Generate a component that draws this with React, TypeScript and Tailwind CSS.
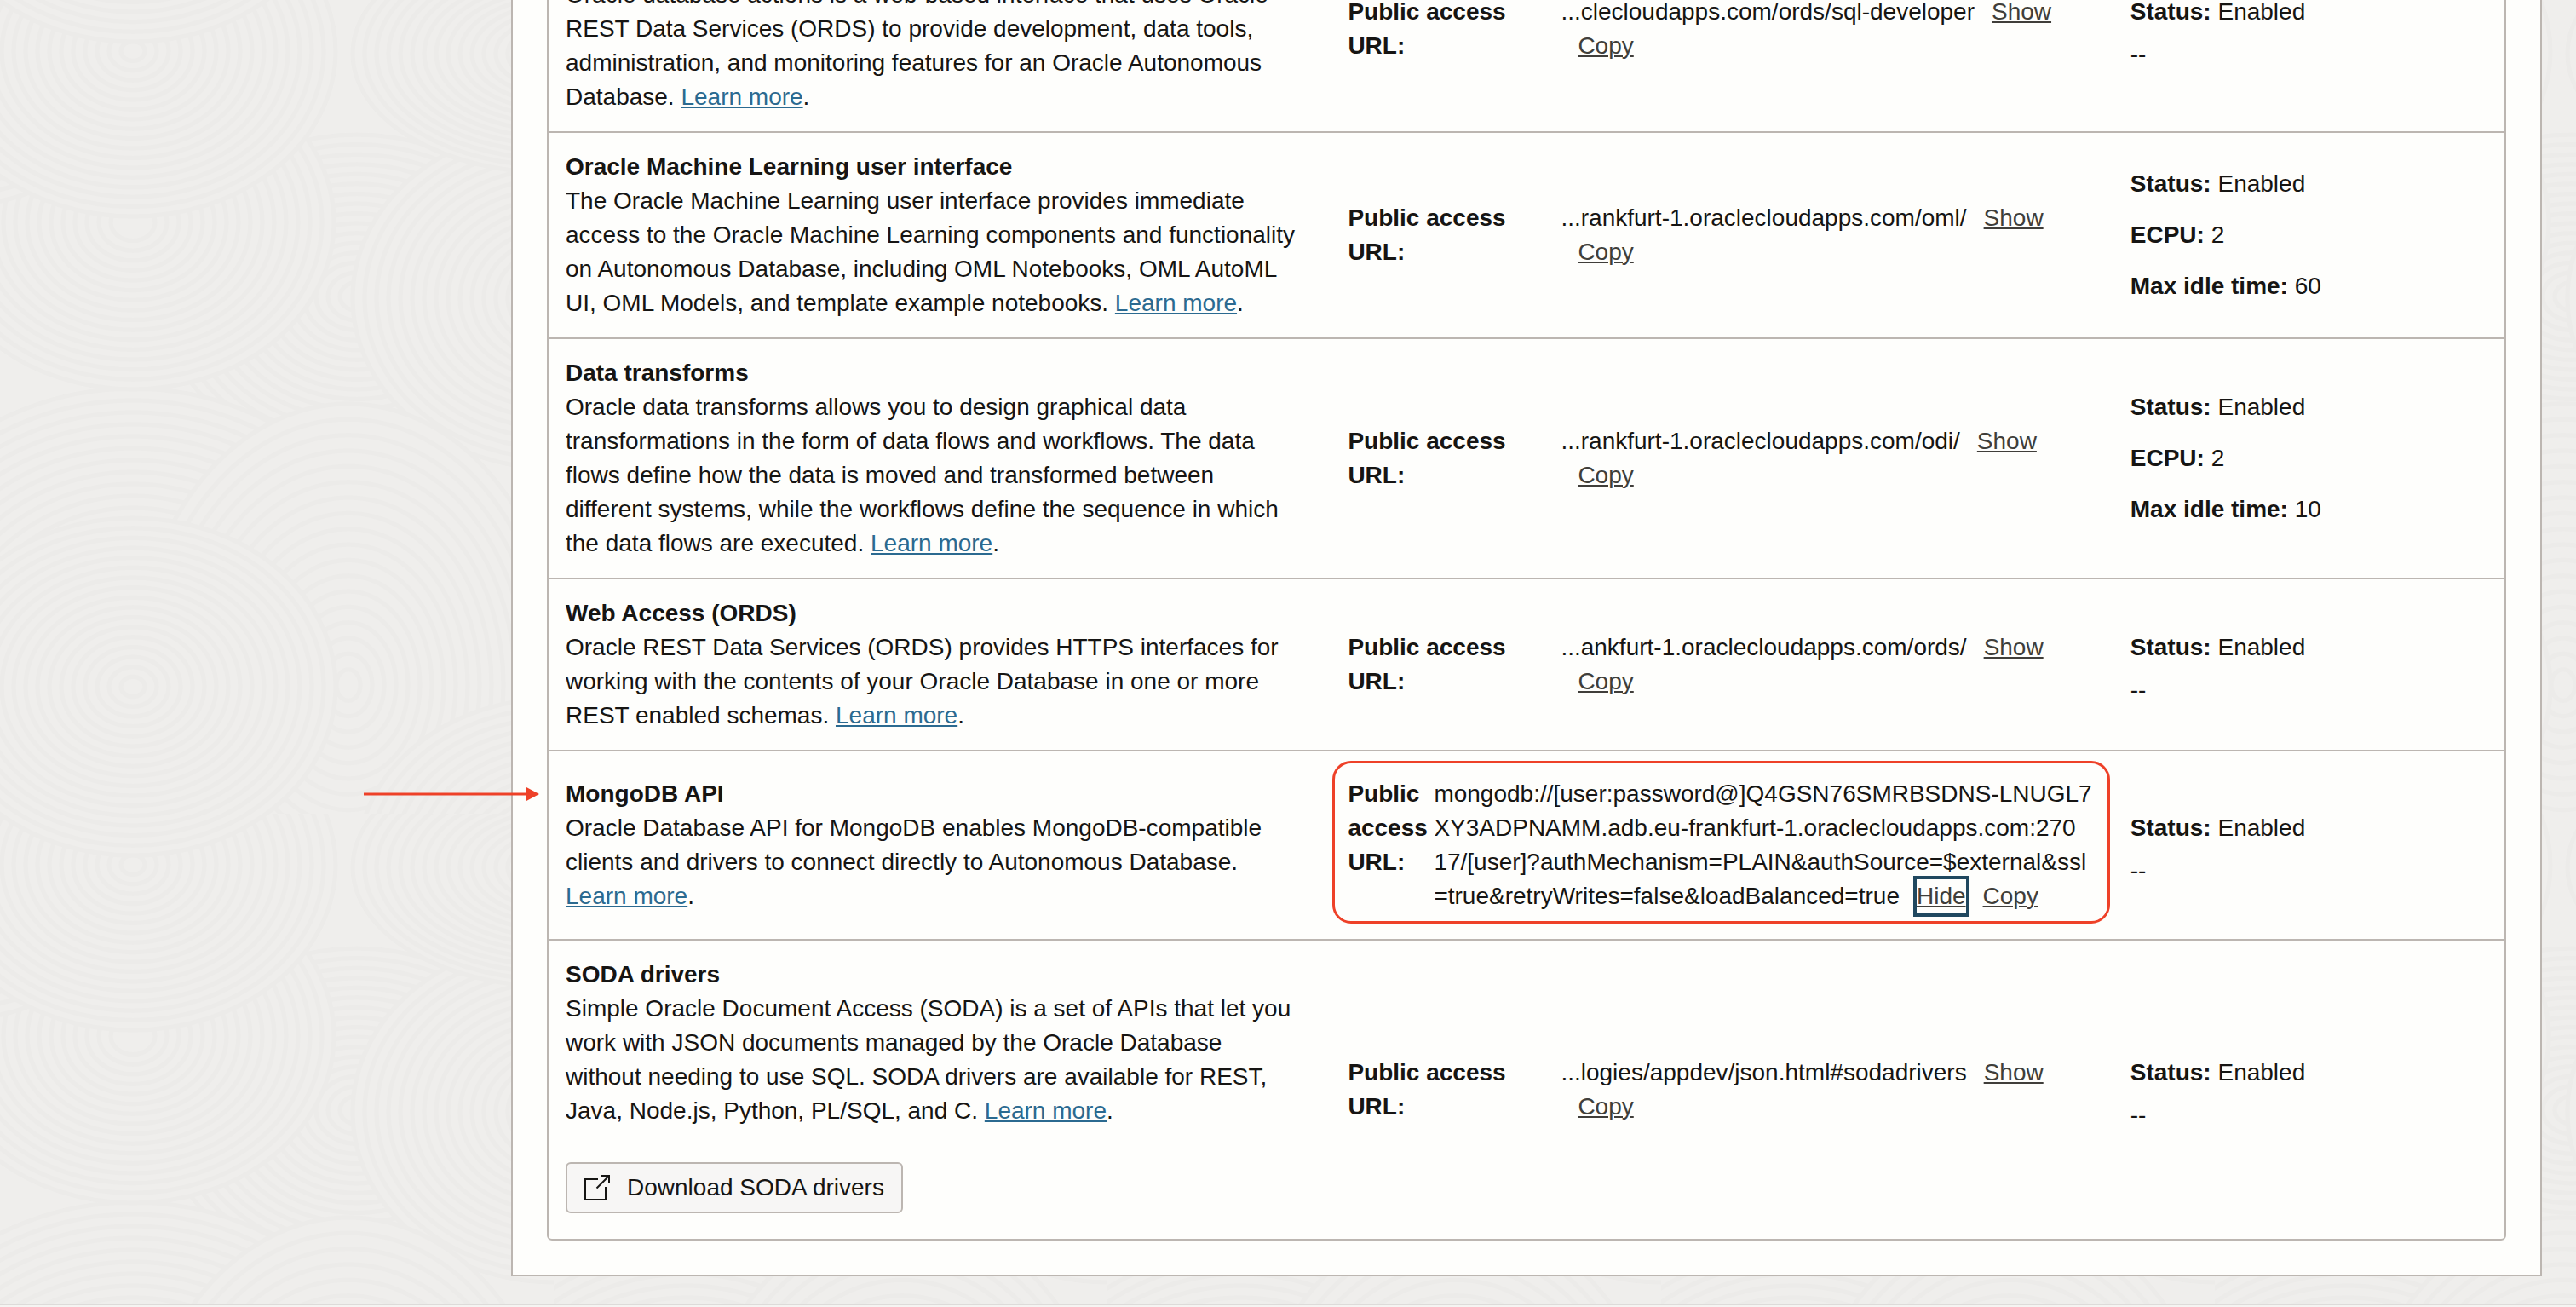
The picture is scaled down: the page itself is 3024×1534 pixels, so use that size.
import { Fragment, type ReactNode } from "react";

type Service = {
  name: string;
  description: string;
  url: string[];
  expanded?: boolean;
  stats: { label: string; value: string }[];
  download?: string;
};

const services: Service[] = [
  {
    name: "Database actions",
    description:
      "Oracle database actions is a web-based interface that uses Oracle REST Data Services (ORDS) to provide development, data tools, administration, and monitoring features for an Oracle Autonomous Database.",
    url: ["...clecloudapps.com/ords/sql-developer"],
    stats: [{ label: "Status:", value: "Enabled" }],
  },
  {
    name: "Oracle Machine Learning user interface",
    description:
      "The Oracle Machine Learning user interface provides immediate access to the Oracle Machine Learning components and functionality on Autonomous Database, including OML Notebooks, OML AutoML UI, OML Models, and template example notebooks.",
    url: ["...rankfurt-1.oraclecloudapps.com/oml/"],
    stats: [
      { label: "Status:", value: "Enabled" },
      { label: "ECPU:", value: "2" },
      { label: "Max idle time:", value: "60" },
    ],
  },
  {
    name: "Data transforms",
    description:
      "Oracle data transforms allows you to design graphical data transformations in the form of data flows and workflows. The data flows define how the data is moved and transformed between different systems, while the workflows define the sequence in which the data flows are executed.",
    url: ["...rankfurt-1.oraclecloudapps.com/odi/"],
    stats: [
      { label: "Status:", value: "Enabled" },
      { label: "ECPU:", value: "2" },
      { label: "Max idle time:", value: "10" },
    ],
  },
  {
    name: "Web Access (ORDS)",
    description:
      "Oracle REST Data Services (ORDS) provides HTTPS interfaces for working with the contents of your Oracle Database in one or more REST enabled schemas.",
    url: ["...ankfurt-1.oraclecloudapps.com/ords/"],
    stats: [{ label: "Status:", value: "Enabled" }],
  },
  {
    name: "MongoDB API",
    description:
      "Oracle Database API for MongoDB enables MongoDB-compatible clients and drivers to connect directly to Autonomous Database.",
    url: [
      "mongodb://[user:password@]Q4GSN76SMRBSDNS-LNUGL7",
      "XY3ADPNAMM.adb.eu-frankfurt-1.oraclecloudapps.com:270",
      "17/[user]?authMechanism=PLAIN&authSource=$external&ssl",
      "=true&retryWrites=false&loadBalanced=true",
    ],
    expanded: true,
    stats: [{ label: "Status:", value: "Enabled" }],
  },
  {
    name: "SODA drivers",
    description:
      "Simple Oracle Document Access (SODA) is a set of APIs that let you work with JSON documents managed by the Oracle Database without needing to use SQL. SODA drivers are available for REST, Java, Node.js, Python, PL/SQL, and C.",
    url: ["...logies/appdev/json.html#sodadrivers"],
    stats: [{ label: "Status:", value: "Enabled" }],
    download: "Download SODA drivers",
  },
];

// Overlapping discs of the sand-garden backdrop, listed back to front.
const discs = [
  { cx: 419, cy: 348, rx: 230, ry: 190 },
  { cx: 650, cy: 350, rx: 236, ry: 200 },
  { cx: 650, cy: 63, rx: 236, ry: 140 },
  { cx: 156, cy: 806, rx: 350, ry: 350 },
  { cx: 409, cy: 804, rx: 252, ry: 330 },
  { cx: 650, cy: 1010, rx: 230, ry: 190 },
  { cx: 156, cy: 261, rx: 236, ry: 196 },
  { cx: -40, cy: 60, rx: 192, ry: 180 },
  { cx: 156, cy: 60, rx: 238, ry: 194 },
  { cx: 156, cy: 806, rx: 238, ry: 198 },
  { cx: 156, cy: -149, rx: 238, ry: 198 },
];

function Backdrop() {
  return (
    <svg className="absolute inset-0 -z-10 size-full" aria-hidden="true">
      <defs>
        <pattern id="swirl" width="650" height="955" patternUnits="userSpaceOnUse">
          {discs.map((disc, d) => (
            <g key={d} fill="#efeeec" stroke="#ecebe9" strokeWidth="5">
              {Array.from({ length: Math.floor(disc.rx / 14) }, (_, i) => {
                const scale = 1 - (i * 14) / disc.rx;
                return (
                  <ellipse key={i} cx={disc.cx} cy={disc.cy} rx={disc.rx * scale} ry={disc.ry * scale} />
                );
              })}
            </g>
          ))}
        </pattern>
      </defs>
      <rect width="100%" height="100%" fill="url(#swirl)" />
    </svg>
  );
}

function ExternalIcon() {
  return (
    <svg className="size-[30px]" viewBox="0 0 30 30" fill="none" stroke="#161513" strokeWidth="2" aria-hidden="true">
      <path d="M16 5H1v24h24V14" />
      <path d="M20 1h9v9" />
      <path d="M29 1 14.500 15.500" />
    </svg>
  );
}

function Callout() {
  return (
    <svg
      className="absolute right-full top-[42px] mr-[11px] h-4 w-[206px]"
      viewBox="0 0 206 16"
      fill="#ee4128"
      aria-hidden="true"
    >
      <rect y="6.500" width="194" height="3" />
      <path d="M191 0l15 8-15 8z" />
    </svg>
  );
}

function Action({ children, focused = false }: { children: ReactNode; focused?: boolean }) {
  return (
    <button
      type="button"
      className={
        "ml-5 text-[#403e3a] underline decoration-2 underline-offset-2" +
        (focused ? " outline-4 outline-[#20485f]" : "")
      }
    >
      {children}
    </button>
  );
}

function ServiceRow({ service }: { service: Service }) {
  return (
    <tr className="border-b-2 border-[#bcb6b1] last:border-b-0">
      <td className="relative py-5 pr-9 pl-5">
        {service.expanded && <Callout />}
        <h3 className="font-bold">{service.name}</h3>
        <p>
          {service.description}{" "}
          <a
            href="#learn-more"
            className="whitespace-nowrap text-[#2b6a90] underline decoration-2 underline-offset-2"
          >
            Learn more
          </a>
          .
        </p>
        {service.download && (
          <button
            type="button"
            className="mt-10 mb-[10px] flex h-[60px] items-center gap-5 rounded-md border-2 border-[#bcb6b1] bg-[#f7f6f5] px-5"
          >
            <ExternalIcon />
            {service.download}
          </button>
        )}
      </td>
      <td className="relative px-5 py-[30px]">
        {service.expanded && (
          <div className="pointer-events-none absolute top-[11px] right-1 bottom-[18px] left-0.5 rounded-[22px] border-3 border-[#ee4128]" />
        )}
        <dl className="flex">
          <dt className={"shrink-0 font-bold " + (service.expanded ? "w-[101px]" : "w-[250px] pr-10")}>
            Public access URL:
          </dt>
          <dd>
            {service.url.map((line, i) => (
              <Fragment key={line}>
                {i > 0 && <br />}
                {line}
              </Fragment>
            ))}
            <Action focused={service.expanded}>{service.expanded ? "Hide" : "Show"}</Action>
            {!service.expanded && <br />}
            <Action>Copy</Action>
          </dd>
        </dl>
      </td>
      <td className="px-5">
        {service.stats.map((stat) => (
          <p key={stat.label} className="py-[10px]">
            <strong className="font-bold">{stat.label}</strong> {stat.value}
          </p>
        ))}
        {service.stats.length === 1 && <p>--</p>}
      </td>
    </tr>
  );
}

export default function App() {
  return (
    <div className="relative isolate flex h-screen flex-col justify-end overflow-hidden bg-[#efeeec] font-['Liberation_Sans',Arial,sans-serif] text-[28px] leading-10 text-[#161513]">
      <Backdrop />
      <main className="mr-10 mb-8 ml-[600px] border-2 border-[#bcb6b1] bg-[#fefefc] p-10">
        <div className="rounded-b-md border-2 border-[#bcb6b1]">
          <table className="w-full table-fixed border-collapse text-left">
            <colgroup>
              <col className="w-[40%]" />
              <col className="w-[40%]" />
              <col className="w-[20%]" />
            </colgroup>
            <tbody>
              {services.map((service) => (
                <ServiceRow key={service.name} service={service} />
              ))}
            </tbody>
          </table>
        </div>
      </main>
      <footer className="h-1 shrink-0 border-t-2 border-[#dddbd9] bg-[#f5f4f2]" />
    </div>
  );
}
